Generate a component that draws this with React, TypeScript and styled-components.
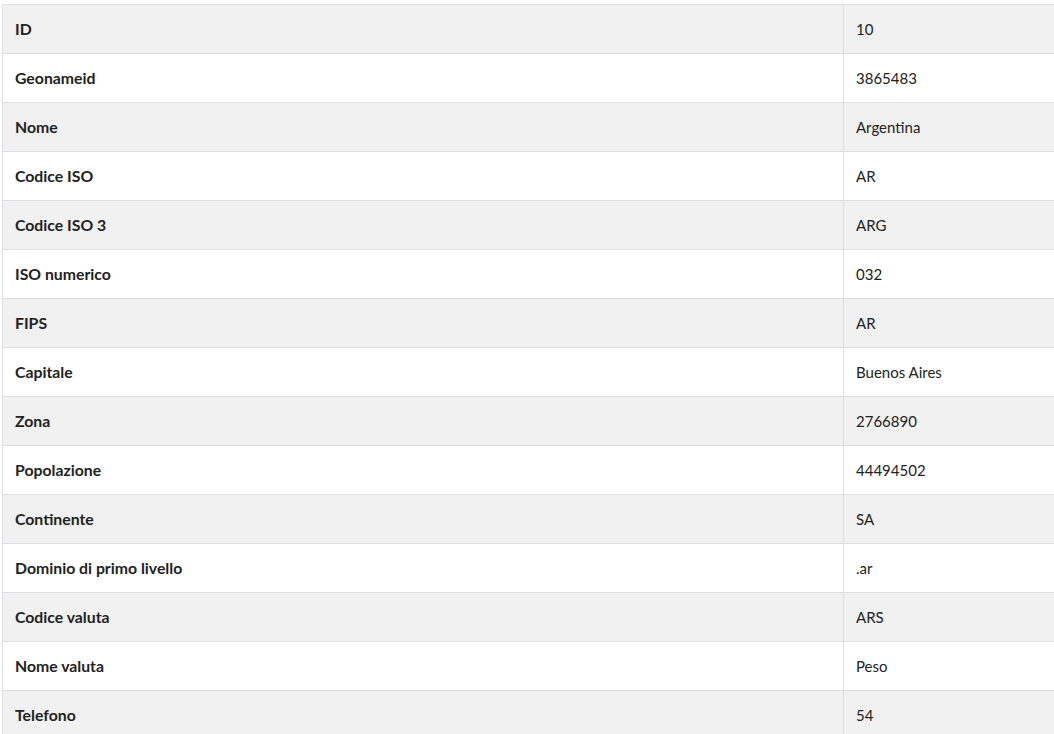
import styled, { createGlobalStyle } from 'styled-components'

const GlobalStyle = createGlobalStyle`
  html, body {
    margin: 0;
    padding: 0;
    background: #fff;
    overflow: hidden;
  }
  body {
    font-family: Lato, "Liberation Sans", sans-serif;
    color: #222;
  }
`

const Page = styled.div`
  padding: 4px 0 0 2px;
  width: 1070px;
`

const Table = styled.table`
  width: 100%;
  border-collapse: collapse;
  border: 1px solid #dedee2;
`

const Row = styled.tr<{ $striped: boolean }>`
  background: ${(p) => (p.$striped ? '#f1f1f1' : '#fff')};
`

const Label = styled.th`
  width: 816px;
  height: 46px;
  padding: 0 12px 2px;
  text-align: left;
  font-size: 15.8px;
  font-weight: 700;
  border: 1px solid #dedee2;
  border-left: none;
`

const Value = styled.td`
  height: 48px;
  padding: 0 12px;
  font-size: 15px;
  font-weight: 400;
  border: 1px solid #dedee2;
`

const rows: [string, string][] = [
  ['ID', '10'],
  ['Geonameid', '3865483'],
  ['Nome', 'Argentina'],
  ['Codice ISO', 'AR'],
  ['Codice ISO 3', 'ARG'],
  ['ISO numerico', '032'],
  ['FIPS', 'AR'],
  ['Capitale', 'Buenos Aires'],
  ['Zona', '2766890'],
  ['Popolazione', '44494502'],
  ['Continente', 'SA'],
  ['Dominio di primo livello', '.ar'],
  ['Codice valuta', 'ARS'],
  ['Nome valuta', 'Peso'],
  ['Telefono', '54'],
]

const App = () => (
  <>
    <GlobalStyle />
    <Page>
      <Table>
        <tbody>
          {rows.map(([label, value], i) => (
            <Row key={label} $striped={i % 2 === 0}>
              <Label>{label}</Label>
              <Value>{value}</Value>
            </Row>
          ))}
        </tbody>
      </Table>
    </Page>
  </>
)

export default App
